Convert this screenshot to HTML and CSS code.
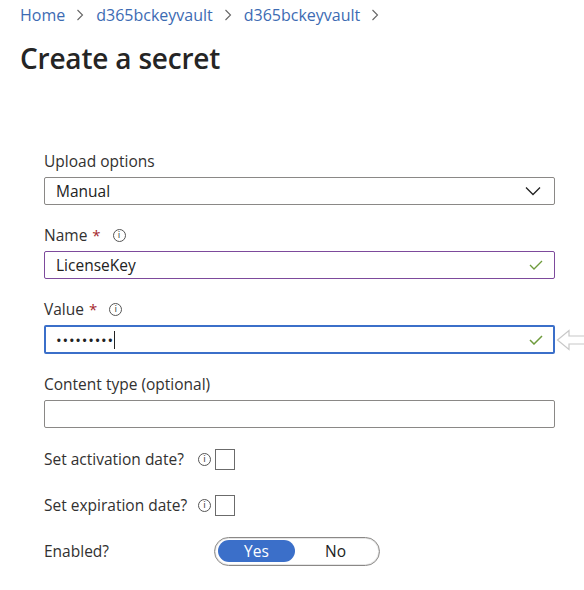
FILE: index.html
```html
<!DOCTYPE html>
<html>
<head>
<meta charset="utf-8">
<link rel="stylesheet" href="styles.css">
</head>
<body>
<nav class="crumbs">
  <a class="crumb">Home</a><svg class="sep" width="8" height="12" viewBox="0 0 8 12"><path d="M1.5 1 L6.5 6 L1.5 11" fill="none" stroke="#666" stroke-width="1.1"/></svg>
  <a class="crumb">d365bckeyvault</a><svg class="sep" width="8" height="12" viewBox="0 0 8 12"><path d="M1.5 1 L6.5 6 L1.5 11" fill="none" stroke="#666" stroke-width="1.1"/></svg>
  <a class="crumb">d365bckeyvault</a><svg class="sep" width="8" height="12" viewBox="0 0 8 12"><path d="M1.5 1 L6.5 6 L1.5 11" fill="none" stroke="#666" stroke-width="1.1"/></svg>
</nav>
<h1 class="title">Create a secret</h1>

<form class="form">
  <div class="field">
    <div class="label">Upload options</div>
    <div class="input select">
      <span>Manual</span>
      <svg class="chev" width="16" height="10" viewBox="0 0 16 10"><path d="M1 1.5 L8 8.5 L15 1.5" fill="none" stroke="#222" stroke-width="1.3"/></svg>
    </div>
  </div>

  <div class="field">
    <div class="label">Name<span class="req">*</span><span class="info">i</span></div>
    <div class="input purple">
      <span>LicenseKey</span>
      <svg class="check" width="14" height="10" viewBox="0 0 14 10"><path d="M1 5 L5 9 L13 1" fill="none" stroke="#6e9b3c" stroke-width="1.3"/></svg>
    </div>
  </div>

  <div class="field">
    <div class="label">Value<span class="req">*</span><span class="info">i</span></div>
    <div class="input focus">
      <span class="dots">•••••••••</span><span class="caret"></span>
      <svg class="check" width="14" height="10" viewBox="0 0 14 10"><path d="M1 5 L5 9 L13 1" fill="none" stroke="#6e9b3c" stroke-width="1.5"/></svg>
      <svg class="pointer" width="30" height="22" viewBox="0 0 30 22"><path d="M1.5 11 L13 1.5 L13 7 L29 7 L29 15 L13 15 L13 20.5 Z" fill="#fff" stroke="#c8c8c8" stroke-width="1.2"/></svg>
    </div>
  </div>

  <div class="field">
    <div class="label">Content type (optional)</div>
    <div class="input"></div>
  </div>

  <div class="row first">
    <span class="rlabel">Set activation date?</span><span class="info">i</span><span class="box"></span>
  </div>
  <div class="row">
    <span class="rlabel">Set expiration date?</span><span class="info">i</span><span class="box"></span>
  </div>
  <div class="row">
    <span class="rlabel enabled">Enabled?</span>
    <div class="toggle"><span class="opt on">Yes</span><span class="opt">No</span></div>
  </div>
</form>
</body>
</html>
```
FILE: styles.css
```css
* { box-sizing: border-box; }
body {
  margin: 0;
  background: #fff;
  font-family: "Open Sans", "Noto Sans", sans-serif;
  color: #323130;
  width: 584px;
  height: 590px;
  overflow: hidden;
}
.crumbs {
  display: flex;
  align-items: center;
  padding: 3px 0 0 20px;
  height: 26px;
  font-size: 16px;
  line-height: 22px;
}
.crumb { color: #3d6bb3; }
.sep { margin: 1px 12px 0 11px; }
.title {
  margin: 14px 0 0 20px;
  font-size: 28px;
  font-weight: 600;
  line-height: 36px;
  color: #252525;
  letter-spacing: -0.2px;
}
.form {
  margin: 75px 0 0 44px;
  width: 511px;
}
.field { margin-bottom: 20px; }
.label {
  display: flex;
  align-items: center;
  font-size: 15.5px;
  line-height: 20px;
  height: 20px;
  margin-bottom: 6px;
}
.req { color: #a4262c; margin-left: 5px; font-size: 15px; }
.info {
  display: inline-flex;
  align-items: center;
  justify-content: center;
  width: 13px;
  height: 13px;
  border: 1px solid #555;
  border-radius: 50%;
  font-size: 9px;
  line-height: 1;
  color: #444;
  margin-left: 12px;
  font-family: "DejaVu Sans", sans-serif;
}
.input {
  position: relative;
  display: flex;
  align-items: center;
  height: 28px;
  border: 1px solid #8a8886;
  border-radius: 2px;
  padding: 0 11px;
  font-size: 15.5px;
  color: #222;
}
.select .chev { margin-left: auto; margin-right: 2px; }
.purple { border-color: #7d4a9c; }
.focus { border: 2px solid #3b6fc9; padding-left: 10px; height: 29px; }
.check { margin-left: auto; }
.focus .check { margin-right: -1px; }
.dots { letter-spacing: 0.8px; font-size: 15px; color: #222; }
.caret {
  display: inline-block;
  width: 1px;
  height: 18px;
  background: #222;
  margin-left: 0;
}
.pointer {
  position: absolute;
  left: 510px;
  top: 2px;
}
.row {
  display: flex;
  align-items: center;
  height: 22px;
  margin-bottom: 24px;
  font-size: 15.5px;
}
.row.first { margin-top: 1px; }
.rlabel { width: 154px; }
.row .info { margin-left: 0; }
.box {
  width: 20px;
  height: 21px;
  border: 1px solid #6b6b6b;
  margin-left: 4px;
}
.enabled { width: 170px; }
.toggle {
  display: flex;
  align-items: center;
  width: 166px;
  height: 29px;
  border: 1px solid #8a8886;
  border-radius: 15px;
  padding: 0 3px;
  box-shadow: inset 0 0 0 1px #e6e6e6;
}
.opt {
  flex: 1;
  text-align: center;
  font-size: 15.5px;
  line-height: 22px;
  color: #222;
}
.opt.on {
  flex: 0 0 77px;
  background: #3b6fc9;
  color: #fff;
  border-radius: 11px;
}
```
